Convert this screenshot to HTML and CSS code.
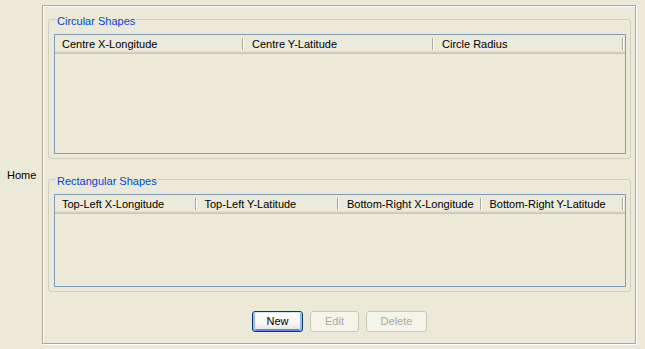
FILE: index.html
```html
<!DOCTYPE html>
<html lang="en">
<head>
  <meta charset="UTF-8">
  <title>Shapes</title>
  <link rel="stylesheet" href="styles.css">
</head>
<body>
  <div class="window">
    <div class="side">
      <span class="home">Home</span>
    </div>

    <div class="panel">
      <fieldset class="group">
        <legend>Circular Shapes</legend>
        <div class="table table-circles">
          <div class="thead cols-3">
            <div class="th">Centre X-Longitude</div>
            <div class="th">Centre Y-Latitude</div>
            <div class="th">Circle Radius</div>
          </div>
        </div>
      </fieldset>

      <fieldset class="group group-rects">
        <legend>Rectangular Shapes</legend>
        <div class="table table-rects">
          <div class="thead cols-4">
            <div class="th">Top-Left X-Longitude</div>
            <div class="th">Top-Left Y-Latitude</div>
            <div class="th">Bottom-Right X-Longitude</div>
            <div class="th">Bottom-Right Y-Latitude</div>
          </div>
        </div>
      </fieldset>

      <div class="buttons">
        <button class="btn btn-default btn-new">New</button>
        <button class="btn btn-edit" disabled>Edit</button>
        <button class="btn btn-delete" disabled>Delete</button>
      </div>
    </div>
  </div>
</body>
</html>
```

FILE: styles.css
```css
body {
  margin: 0;
  padding: 0;
  background-color: #ece9d8;
  font-family: "Liberation Sans", Arial, sans-serif;
  font-size: 11px;
  color: #000;
}

.window {
  display: flex;
  height: 349px;
}

.side {
  width: 42px;
  box-sizing: border-box;
  display: flex;
  align-items: center;
  padding-left: 7px;
  padding-top: 2px;
  line-height: 13px;
}

/* etched border round the main area */
.panel {
  margin-top: 5px;
  width: 594px;
  height: 339px;
  box-sizing: border-box;
  border: 1px solid #aca899;
  box-shadow: inset 1px 1px 0 #fff, 1px 1px 0 #fff;
  padding: 7px 4px 0 5px;
  display: flex;
  flex-direction: column;
}

.group {
  margin: 0;
  min-width: 0;
  padding: 8px 4px 4px 5px;
  border: 1px solid #d0d0bf;
  border-radius: 3px;
}

.group legend {
  margin-left: 2px;
  padding: 3px 1px 0;
  line-height: 10px;
  color: #0046d5;
}

.group-rects {
  margin-top: 14px;
}

.table {
  box-sizing: border-box;
  border: 1px solid #7f9db9;
  background-color: #ece9d8;
}

.table-circles {
  height: 120px;
}

.table-rects {
  height: 93px;
}

.thead {
  display: grid;
  padding-bottom: 3px;
  background: linear-gradient(to bottom,
    #ebeadb 0, #ebeadb calc(100% - 3px),
    #e2decd calc(100% - 3px), #e2decd calc(100% - 2px),
    #d6d2c2 calc(100% - 2px), #d6d2c2 calc(100% - 1px),
    #cbc7b8 calc(100% - 1px));
}

.cols-3 {
  grid-template-columns: repeat(3, 1fr);
}

.cols-4 {
  grid-template-columns: repeat(4, 1fr);
}

.th {
  padding: 3px 0 0 7px;
  line-height: 13px;
  white-space: nowrap;
  overflow: hidden;
  background:
    linear-gradient(#aca899, #aca899) right 2px top 3px / 1px 12px no-repeat,
    linear-gradient(#fff, #fff) right 1px top 3px / 1px 12px no-repeat;
}

.buttons {
  display: flex;
  justify-content: center;
  gap: 7px;
  margin-top: 19px;
}

.btn {
  height: 21px;
  box-sizing: border-box;
  padding: 0;
  font: inherit;
  line-height: 13px;
  border-radius: 3px;
  border: 1px solid #c9c7ba;
  background-color: #f5f4ea;
  color: #aca899;
}

.btn-default {
  border-color: #003c74;
  color: #000;
  background: linear-gradient(to bottom, #fff 0, #f7f7f4 60%, #e3e2da 100%);
  box-shadow: inset 0 1px 0 #cee7ff, inset 2px 0 0 #9fb8ee, inset -2px 0 0 #9fb8ee, inset 0 -2px 0 #6982ee;
}

.btn-new {
  width: 51px;
}

.btn-edit {
  width: 49px;
}

.btn-delete {
  width: 61px;
}
```
